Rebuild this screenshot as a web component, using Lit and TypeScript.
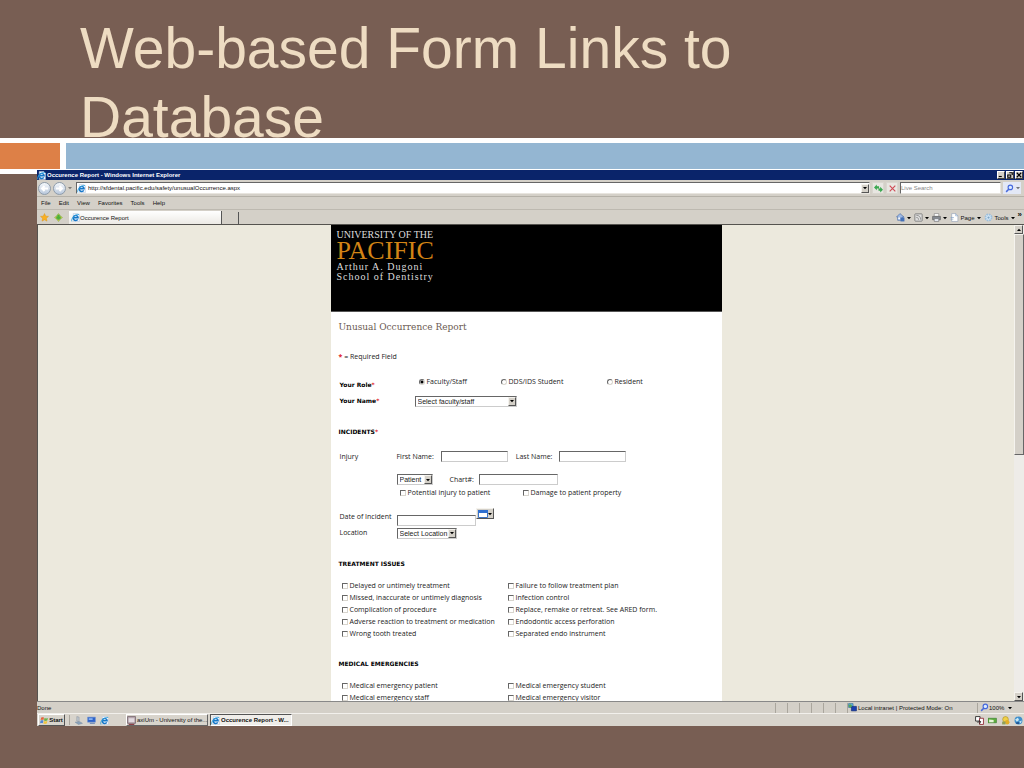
import { LitElement, html, css, svg } from "lit";
import { customElement } from "lit/decorators.js";

const ieIcon = html`<svg class="ico" viewBox="0 0 16 16" aria-hidden="true">
  <path d="M4 1h8l3 3v11H4z" fill="#f4f8ff" stroke="#b4c6dc" />
  <path d="M12 11.200a4.400 4.400 0 1 1 .7-2.700H4.400" fill="none" stroke="#1778c8" stroke-width="2.600" />
  <path d="M1.500 15C-1 11 7 1.500 14.500 2.500" fill="none" stroke="#37a5df" stroke-width="1.600" />
</svg>`;

const down = html`<svg class="down" viewBox="0 0 8 8" aria-hidden="true"><path d="M0 2h8L4 6.500z" fill="#000" /></svg>`;

const glyph = (body: unknown) => html`<svg class="ico" viewBox="0 0 16 16" aria-hidden="true">${body}</svg>`;

const icons = {
  star: svg`<path d="M8 1l2 4.600 5 .5-3.800 3.300 1.200 5L8 12l-4.400 2.400 1.200-5L1 6.100l5-.5z" fill="#fbb01f" stroke="#e09a1a"/>`,
  addStar: svg`<path d="M8 1l3 4 4 3-4 3-3 4-3-4-4-3 4-3z" fill="#e9c94a" stroke="#6fae48"/><path d="M8 3v9M4 8h8" stroke="#48b13c" stroke-width="4"/>`,
  refresh: svg`<path d="M0 6l5-5v3h4v4H5v3zM16 10l-5 5v-3H8V8h3V5z" fill="#3aa850"/>`,
  stop: svg`<path d="M3 3l10 10M13 3L3 13" stroke="#cf4a55" stroke-width="2"/>`,
  search: svg`<circle cx="9.500" cy="6" r="4" fill="#dcebff" stroke="#4568dd" stroke-width="2"/><path d="M7 9l-5 5" stroke="#4568dd" stroke-width="2.600"/>`,
  home: svg`<path d="M1 7l6-6 7 6h-2v6H3V7z" fill="#9eb9e4" stroke="#3b5f9e"/><path d="M8 8h7v7H8z" fill="#4470b8"/><path d="M4 8h3v3H4z" fill="#fff"/>`,
  feed: svg`<rect x="1.500" y="1.500" width="13" height="13" rx="1" fill="#dedede" stroke="#777" stroke-width="1.500"/><path d="M4 4c5 0 8 3 8 8M4 8c3 0 4 1 4 4" fill="none" stroke="#888" stroke-width="1.500"/>`,
  print: svg`<path d="M4 1h8v5H4z" fill="#fff" stroke="#777"/><path d="M1 6h14v6H1z" fill="#858a92" stroke="#555"/><path d="M4 10h8v5H4z" fill="#e8edf5" stroke="#666"/>`,
  page: svg`<path d="M3 1h7l4 4v10H3z" fill="#fff" stroke="#8a99b0"/><path d="M10 1v4h4M1 8h6M1 11h5" fill="none" stroke="#7297c4"/>`,
  gear: svg`<circle cx="8" cy="8" r="5.500" fill="#d5e8f7" stroke="#9dbfdc" stroke-width="3" stroke-dasharray="3 1.300"/><circle cx="8" cy="8" r="2" fill="#7ca4c6"/>`,
  windows: svg`<path d="M2 3c2-1 4-1 5 0L6 7.500C5 6.500 3 6.500 1 7.500z" fill="#e5643a"/><path d="M8 3.500c2 1 4 1 6 0L13 8c-2 1-4 1-6 0z" fill="#6cb34b"/><path d="M1 8.500c2-1 4-1 5 0L5 13c-1-1-3-1-5 0z" fill="#5185d6"/><path d="M7 9c2 1 4 1 6 0l-1 4.500c-2 1-4 1-6 0z" fill="#f1c53e"/>`,
  desk: svg`<path d="M5 1l4 1v8l-4-1z" fill="#c0c7cf" stroke="#8b949f"/><path d="M2 11l8-1 5 3-7 2z" fill="#8aa3bb" stroke="#7c90a5"/>`,
  monitor: svg`<path d="M1 2h14v9H1z" fill="#2e63c9" stroke="#7898cf"/><path d="M3 4h7v3H3z" fill="#8bb6f4"/><path d="M5 12h9v2H5z" fill="#6f8bb5"/>`,
  app: svg`<path d="M1 1h14v12H1z" fill="#b9a8b0" stroke="#503c48"/><path d="M3 4h10v7H3z" fill="#e1d9df"/><path d="M3 14h10v2H3z" fill="#8d3f47"/>`,
  net: svg`<path d="M1 1h8v7H1z" fill="#64b5e6" stroke="#27688e"/><path d="M6 6h9v8H6z" fill="#1a3fb0" stroke="#0c2364"/><circle cx="4" cy="5" r="3" fill="#54a65c"/>`,
  boxes: svg`<path d="M1 1h8v8H1z" fill="#fff" stroke="#222" stroke-width="1.500"/><path d="M8 4h7v11H8z" fill="#fff" stroke="#8d2430" stroke-width="1.500"/><path d="M4 11l6-1M7 8l3 2-2 4" stroke="#222" stroke-width="1.500" fill="none"/>`,
  card: svg`<path d="M0 4h15v8H0z" fill="#5dad3d" stroke="#2f7427"/><path d="M2 6l8 1v4H2z" fill="#e6f4d8"/>`,
  shield: svg`<circle cx="8" cy="6" r="5" fill="#f0d048" stroke="#a88817"/><circle cx="11" cy="11" r="4" fill="#e2ae28"/><path d="M2 10h6v5H2z" fill="#8fa05a"/>`,
  globe: svg`<circle cx="8" cy="8" r="7" fill="#3f8fcc"/><path d="M2 6l5-3 2 4-4 3zM9 10l5-2-2 5z" fill="#c9e8f5"/><path d="M4 11h5v3H4z" fill="#1d4f8d"/>`,
};

const treatment = [
  ["Delayed or untimely treatment", "Failure to follow treatment plan"],
  ["Missed, inaccurate or untimely diagnosis", "Infection control"],
  ["Complication of procedure", "Replace, remake or retreat. See ARED form."],
  ["Adverse reaction to treatment or medication", "Endodontic access perforation"],
  ["Wrong tooth treated", "Separated endo instrument"],
];
const emergencies = [
  ["Medical emergency patient", "Medical emergency student"],
  ["Medical emergency staff", "Medical emergency visitor"],
];

const check = (text: string) => html`<label class="opt"><input type="checkbox" />${text}</label>`;
const checks = (rows: string[][]) => html`<div class="checks">${rows.flat().map(check)}</div>`;
const star = html`<b class="req">*</b>`;

@customElement("app-root")
export class AppRoot extends LitElement {
  static styles = css`
    :host {
      display: flex;
      flex-direction: column;
      height: 100vh;
      overflow: hidden;
      background: #785e53;
      font-family: "Liberation Sans", sans-serif;
      font-size: 6px;
      line-height: 8px;
      color: #111;
    }
    * { box-sizing: border-box; }
    h1, h2, h3, p { margin: 0; }
    button, input, select { font: inherit; color: inherit; margin: 0; padding: 0; border: 0; border-radius: 0; }
    button { background: none; display: flex; align-items: center; justify-content: center; white-space: nowrap; }
    .slide-title {
      height: 138px;
      padding: 14px 80px 0;
      font: 400 57px/69px "Liberation Sans", sans-serif;
      color: #eedcc2;
    }
    .band { display: flex; gap: 6px; background: #fff; padding: 5px 0 1px; flex: none; }
    .band i { height: 26px; background: #94b6d2; flex: 1; }
    .band i.accent { flex: 0 0 60px; background: #dd8047; }
    .stage { flex: 1; min-height: 0; display: flex; padding-bottom: 42px; }
    .edge { width: 37px; border-top: 4px solid #fff; }
    .window { flex: 1; min-width: 0; display: flex; flex-direction: column; background: #d4d0c8; }
    .ico { width: 9px; height: 9px; flex: none; }
    .down { width: 4px; height: 4px; flex: none; }
    .titlebar { height: 10px; flex: none; background: #0a246a; color: #fff; display: flex; align-items: center; gap: 1px; padding: 0 1px 0 0; font-weight: 700; }
    .fill { flex: 1; }
    .wbtn { width: 8px; height: 8px; background: #d4d0c8; border: 1px solid; border-color: #fff #404040 #404040 #fff; }
    .wbtn svg { width: 6px; height: 6px; }
    .address { height: 17px; flex: none; display: flex; align-items: center; padding: 0 3px 0 1px; gap: 2px; border-bottom: 1px solid #b5b1a8; }
    .nav { width: 13px; height: 13px; border-radius: 50%; border: 1px solid #8e9cab; background: linear-gradient(#f5f8fb, #b9c8dc); }
    .nav svg { width: 9px; height: 9px; }
    .hist { opacity: 0.4; display: flex; }
    .url { flex: 1; height: 12px; background: #fff; border: 1px solid; border-color: #666 #e8e5df #e8e5df #666; display: flex; align-items: center; gap: 2px; margin-left: 2px; }
    .url input { flex: 1; min-width: 0; height: 10px; background: none; }
    .arrow { width: 8px; height: 9px; background: #d4d0c8; border: 1px solid; border-color: #f5f3ee #555 #555 #f5f3ee; }
    .tool { width: 12px; height: 12px; background: #e8e6e1; border: 1px solid #d9d6cf; }
    .search { width: 101px; height: 12px; background: #fff; border: 1px solid; border-color: #666 #e8e5df #e8e5df #666; }
    .search::placeholder { color: #888; opacity: 1; }
    .wide { width: 18px; height: 12px; background: #e3e8f6; gap: 2px; }
    .wide .down { opacity: 0.5; }
    .menu { height: 13px; flex: none; display: flex; align-items: center; gap: 8px; padding: 0 4px; border-bottom: 1px solid #bdb9b0; }
    .tabs { height: 15px; flex: none; display: flex; align-items: center; gap: 3px; padding: 1px 2px 0; border-bottom: 1px solid #55534f; }
    .fav { width: 11px; }
    .tab { width: 153px; height: 13px; background: linear-gradient(#fff, #eceae5); border-right: 1px solid #555; justify-content: flex-start; padding: 0 2px; margin-left: 2px; }
    .newtab { width: 14px; height: 12px; border-right: 1px solid #555; }
    .cmd { gap: 2px; }
    .more { font: 700 8px/8px "Liberation Sans", sans-serif; align-self: flex-start; }
    .view { flex: 1; min-height: 0; display: flex; background: #ece9dd; border-left: 1px solid #55534f; }
    .scroller { flex: 1; min-width: 0; overflow: hidden; }
    .scroll { width: 10px; background: #eeece8; display: flex; flex-direction: column; }
    .thumb { height: 221px; background: #d4d0c8; border: 1px solid; border-color: #f5f3ee #666 #666 #f5f3ee; }
    .scroll .arrow { width: 9px; }
    .flip svg { transform: rotate(180deg); }
    .sheet { width: 40%; min-width: 391px; margin: 0 auto; background: #fff; font: 7px/8px "Open Sans", sans-serif; color: #222; }
    .brand { height: 87px; background: #000; border-bottom: 1px solid #555; padding: 5px 6px; color: #ddd; font: 10px/10px "Liberation Serif", serif; }
    .brand .big { font-size: 26px; line-height: 22px; color: #d28416; }
    .brand .spaced { letter-spacing: 1px; }
    form { padding: 0 8px; }
    .title { font: 400 9px/30px "DejaVu Serif", serif; color: #6b5a52; }
    .req { color: #e0202a; }
    .note { line-height: 30px; }
    .row { display: flex; align-items: center; }
    .role { height: 19px; }
    .lab { font: 700 6px/8px "DejaVu Sans", sans-serif; color: #000; }
    .role .lab { width: 80px; padding: 6px 0 0 1px; }
    .role .opt:nth-child(2) { width: 82px; }
    .role .opt:nth-child(3) { width: 106px; }
    .name { height: 20px; }
    .name .lab { width: 76px; padding-left: 1px; }
    .opt { display: flex; align-items: center; gap: 2px; white-space: nowrap; }
    input[type="checkbox"], input[type="radio"] { appearance: none; width: 6px; height: 6px; background: #fff; border: 1px solid; border-color: #666 #d8d5ce #d8d5ce #666; flex: none; }
    input[type="radio"] { border-radius: 50%; }
    input[type="radio"]:checked { background: radial-gradient(#000 0 1px, #fff 2px); }
    .pick { position: relative; display: inline-flex; height: 11px; }
    .pick select { appearance: none; height: 11px; padding: 0 8px 0 2px; background: #fff; border: 1px solid; border-color: #666 #ccc #ccc #666; font: 7px/9px "Liberation Sans", sans-serif; }
    .pick .arrow { position: absolute; right: 1px; top: 1px; display: flex; align-items: center; justify-content: center; pointer-events: none; }
    .w1 select { width: 102px; }
    .w2 select { width: 36px; }
    .w3 select { width: 60px; }
    .text { height: 11px; background: #fff; border: 1px solid; border-color: #666 #ccc #ccc #666; }
    h3 { font: 700 6px/32px "DejaVu Sans", sans-serif; color: #000; }
    .sec { margin-top: 5px; }
    .gap { margin-top: 8px; }
    .c1 { width: 58px; flex: none; padding-left: 1px; white-space: nowrap; }
    .injury { height: 17px; }
    .injury .text { width: 67px; margin: 0 8px 0 7px; }
    .chart { height: 15px; margin: 7px 0 0 58px; }
    .chart .text { width: 79px; margin-left: 5px; }
    .chart .pick { margin-right: 17px; }
    .harm { height: 12px; padding-left: 61px; display: grid; grid-template-columns: 123px 1fr; }
    .date { height: 18px; margin-top: 9px; }
    .date .text { width: 79px; align-self: flex-end; }
    .date button { width: 18px; height: 11px; align-self: flex-start; background: #d4d0c8; border: 1px solid; border-color: #f5f3ee #555 #555 #f5f3ee; }
    .date svg:first-child { width: 10px; height: 8px; }
    .loc { height: 14px; }
    .checks { display: grid; grid-template-columns: 166px 1fr; grid-auto-rows: 12px; padding: 0 0 0 3px; }
    .status { height: 12px; flex: none; display: flex; align-items: center; border-top: 1px solid #888; }
    .cell { height: 10px; width: 12px; border-left: 1px solid #aaa69d; }
    .zone { height: 10px; width: 130px; display: flex; align-items: center; gap: 1px; border-left: 1px solid #aaa69d; }
    .zoom { width: 47px; padding: 0 12px 0 2px; justify-content: flex-start; }
    .taskbar { height: 13px; flex: none; display: flex; align-items: center; background: #d8d4cc; border-top: 1px solid #f2f0ec; padding: 0 1px; gap: 4px; }
    .start { width: 27px; height: 12px; border: 1px solid; border-color: #fff #555 #555 #fff; font-weight: 700; }
    .sep { height: 10px; border-left: 1px solid #aaa69d; }
    .task { width: 82px; height: 12px; border: 1px solid; border-color: #fff #666 #666 #fff; gap: 1px; justify-content: flex-start; }
    .task.on { border-color: #555 #fff #fff #555; background: #f0eeea; font-weight: 700; margin-left: -2px; }
    .task.first { margin-left: 13px; }
  `;

  render() {
    return html`
      <h1 class="slide-title">Web-based Form Links to Database</h1>
      <div class="band"><i class="accent"></i><i></i></div>
      <div class="stage">
        <div class="edge"></div>
        <div class="window">
          <div class="titlebar">
            ${ieIcon}<span>Occurence Report - Windows Internet Explorer</span><span class="fill"></span>
            <button class="wbtn" aria-label="Minimize"><svg viewBox="0 0 8 8"><path d="M1 6h4" stroke="#000" stroke-width="1.500" /></svg></button>
            <button class="wbtn" aria-label="Restore"><svg viewBox="0 0 8 8"><path d="M3 1h4v3M1 4h4v3H1z" fill="none" stroke="#000" stroke-width="1.400" /></svg></button>
            <button class="wbtn" aria-label="Close"><svg viewBox="0 0 8 8"><path d="M1 1l6 6M7 1L1 7" stroke="#000" stroke-width="1.500" /></svg></button>
          </div>
          <div class="address">
            <button class="nav" aria-label="Back"><svg viewBox="0 0 9 9"><path d="M8 4.500H2M4.500 2L2 4.500 4.500 7" fill="none" stroke="#fff" stroke-width="2" /></svg></button>
            <button class="nav" aria-label="Forward"><svg viewBox="0 0 9 9"><path d="M1 4.500h6M4.500 2L7 4.500 4.500 7" fill="none" stroke="#fff" stroke-width="2" /></svg></button>
            <span class="hist">${down}</span>
            <div class="url">${ieIcon}<input aria-label="Address" value="http://sfdental.pacific.edu/safety/unusualOccurrence.aspx" /><button class="arrow" aria-label="History">${down}</button></div>
            <button class="tool" aria-label="Refresh">${glyph(icons.refresh)}</button>
            <button class="tool" aria-label="Stop">${glyph(icons.stop)}</button>
            <input class="search" aria-label="Live Search" placeholder="Live Search" />
            <button class="wide" aria-label="Search">${glyph(icons.search)}${down}</button>
          </div>
          <div class="menu">${["File", "Edit", "View", "Favorites", "Tools", "Help"].map((m) => html`<button>${m}</button>`)}</div>
          <div class="tabs">
            <button class="fav" aria-label="Favorites">${glyph(icons.star)}</button>
            <button class="fav" aria-label="Add to favorites">${glyph(icons.addStar)}</button>
            <button class="tab">${ieIcon}Occurence Report</button>
            <button class="newtab" aria-label="New tab"></button>
            <span class="fill"></span>
            <button class="cmd" aria-label="Home">${glyph(icons.home)}${down}</button>
            <button class="cmd" aria-label="Feeds">${glyph(icons.feed)}${down}</button>
            <button class="cmd" aria-label="Print">${glyph(icons.print)}${down}</button>
            <button class="cmd">${glyph(icons.page)}Page${down}</button>
            <button class="cmd">${glyph(icons.gear)}Tools${down}</button>
            <button class="more">»</button>
          </div>
          <div class="view">
            <div class="scroller">
              <div class="sheet">
                <div class="brand">
                  <div>UNIVERSITY OF THE</div>
                  <div class="big">PACIFIC</div>
                  <div class="spaced">Arthur A. Dugoni</div>
                  <div class="spaced">School of Dentistry</div>
                </div>
                <form>
                  <h2 class="title">Unusual Occurrence Report</h2>
                  <p class="note"><b class="req">*</b> = Required Field</p>
                  <div class="row role">
                    <b class="lab">Your Role${star}</b>
                    <label class="opt"><input type="radio" name="role" checked />Faculty/Staff</label>
                    <label class="opt"><input type="radio" name="role" />DDS/IDS Student</label>
                    <label class="opt"><input type="radio" name="role" />Resident</label>
                  </div>
                  <div class="row name">
                    <label class="lab" for="who">Your Name${star}</label>
                    <span class="pick w1"><select id="who"><option>Select faculty/staff</option></select><span class="arrow">${down}</span></span>
                  </div>
                  <h3 class="sec">INCIDENTS${star}</h3>
                  <div class="row injury">
                    <span class="c1">Injury</span>
                    <label for="first">First Name:</label><input class="text" id="first" />
                    <label for="last">Last Name:</label><input class="text" id="last" />
                  </div>
                  <div class="row chart">
                    <span class="pick w2"><select aria-label="Person"><option>Patient</option></select><span class="arrow">${down}</span></span>
                    <label for="chart">Chart#:</label><input class="text" id="chart" />
                  </div>
                  <div class="harm">${check("Potential injury to patient")}${check("Damage to patient property")}</div>
                  <div class="row date">
                    <label class="c1" for="date">Date of Incident</label><input class="text" id="date" />
                    <button type="button" aria-label="Calendar">
                      <svg viewBox="0 0 10 8"><path d="M.5.5h9v7h-9z" fill="#fff" stroke="#3b73c6" /><path d="M0 0h10v3H0z" fill="#2f6fd0" /></svg>${down}
                    </button>
                  </div>
                  <div class="row loc">
                    <label class="c1" for="loc">Location</label>
                    <span class="pick w3"><select id="loc"><option>Select Location</option></select><span class="arrow">${down}</span></span>
                  </div>
                  <h3 class="gap">TREATMENT ISSUES</h3>
                  ${checks(treatment)}
                  <h3 class="gap">MEDICAL EMERGENCIES</h3>
                  ${checks(emergencies)}
                </form>
              </div>
            </div>
            <div class="scroll">
              <button class="arrow flip" aria-label="Scroll up">${down}</button>
              <div class="thumb"></div>
              <span class="fill"></span>
              <button class="arrow" aria-label="Scroll down">${down}</button>
            </div>
          </div>
          <div class="status">
            <span>Done</span><span class="fill"></span>
            ${[1, 2, 3, 4, 5, 6].map(() => html`<span class="cell"></span>`)}
            <span class="zone">${glyph(icons.net)}Local intranet | Protected Mode: On</span>
            <button class="cell zoom">${glyph(icons.search)}100%<span class="fill"></span>${down}</button>
          </div>
          <div class="taskbar">
            <button class="start">${glyph(icons.windows)}Start</button>
            <span class="sep"></span>
            ${glyph(icons.desk)}${glyph(icons.monitor)}${ieIcon}
            <button class="task first">${glyph(icons.app)}axiUm - University of the...</button>
            <button class="task on">${ieIcon}Occurence Report - W...</button>
            <span class="fill"></span>
            ${glyph(icons.boxes)}${glyph(icons.card)}${glyph(icons.shield)}${glyph(icons.globe)}
          </div>
        </div>
      </div>
    `;
  }
}
